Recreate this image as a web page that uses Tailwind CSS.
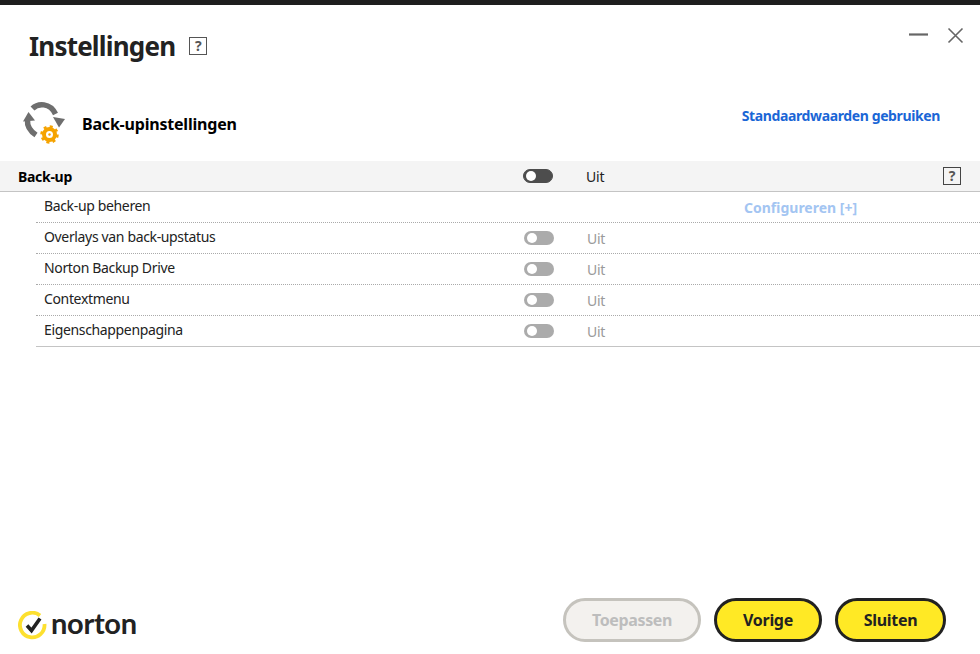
<!DOCTYPE html>
<html lang="nl">
<head>
<meta charset="utf-8">
<script src="https://cdn.jsdelivr.net/npm/@tailwindcss/browser@4"></script>
</head>
<body class="bg-white">
<div class="w-[980px] h-[654px] overflow-hidden flex flex-col bg-white text-[#222] font-['Noto_Sans','Open_Sans',sans-serif]">
  <div class="h-[5px] bg-[#1e1e1e] shrink-0"></div>

  <div class="h-[156px] shrink-0 flex flex-col">
    <div class="flex justify-between pl-[29px] pr-[16px] pt-[23px]">
      <div class="flex items-center gap-[14px] h-[36px]">
        <h1 class="text-[26px] leading-[36px] font-bold tracking-[-0.8px] text-[#222]">Instellingen</h1>
        <span class="w-[18px] h-[18px] -mt-[1px] border-[1.500px] border-[#555] flex items-center justify-center text-[14px] leading-none font-bold text-[#555]">?</span>
      </div>
      <div class="flex items-start gap-[19px] -mt-[2px]">
        <svg class="w-[19px] h-[20px]" viewBox="0 0 19 20"><path d="M0 8.500H19" stroke="#666" stroke-width="2.200"/></svg>
        <svg class="w-[17px] h-[17px] mt-[1px]" viewBox="0 0 17 17"><path d="M1.500 1.500L15.500 15.500M15.500 1.500L1.500 15.500" stroke="#666" stroke-width="1.600" fill="none"/></svg>
      </div>
    </div>
    <div class="flex items-start justify-between pl-[22px] pr-[40px] mt-[37px]">
      <div class="flex items-center gap-[15px]">
        <svg class="w-[45px] h-[46px]" viewBox="0 0 45 46">
          <path d="M10.500 7.500C16 2 28 1.500 33.500 13" stroke="#6e6e6e" stroke-width="5.500" fill="none"/>
          <path d="M31 16L43 18L37 26.500Z" fill="#6e6e6e"/>
          <path d="M5.500 19C5 25 8 30 14 34" stroke="#6e6e6e" stroke-width="5.500" fill="none"/>
          <path d="M1 20.500L6.500 11L13 19.500Z" fill="#6e6e6e"/>
          <circle cx="27.500" cy="33.500" r="5.500" fill="none" stroke="#f5a300" stroke-width="4"/>
          <circle cx="27.500" cy="33.500" r="8" fill="none" stroke="#f5a300" stroke-width="2.500" stroke-dasharray="3 3.280"/>
          <circle cx="27.500" cy="33.500" r="1.200" fill="#f5a300"/>
        </svg>
        <h2 class="text-[16px] leading-[22px] font-bold tracking-[-0.2px] text-black">Back-upinstellingen</h2>
      </div>
      <a class="text-[14px] leading-[20px] font-bold tracking-[-0.38px] text-[#1a66d6] mt-[5px]">Standaardwaarden gebruiken</a>
    </div>
  </div>

  <div class="h-[31px] shrink-0 bg-[#f4f4f4] border-b border-[#c4c4c4] flex items-center pl-[18px] pr-[19px]">
    <span class="w-[505px] mt-[1px] text-[14px] font-bold tracking-[-0.3px] text-black">Back-up</span>
    <span class="w-[30px] h-[14px] rounded-full bg-[#4d4d4d] flex items-center pl-[2px] border border-[#4d4d4d]"><span class="w-[10px] h-[10px] rounded-full bg-white"></span></span>
    <span class="ml-[33px] text-[14px] tracking-[-0.2px] text-[#222]">Uit</span>
    <span class="ml-auto w-[18px] h-[18px] border-[1.500px] border-[#444] flex items-center justify-center text-[14px] leading-none font-bold text-[#555]">?</span>
  </div>

  <div class="ml-[36px] flex flex-col text-[14px] tracking-[-0.35px] text-[#222]">
    <div class="h-[31px] border-b border-dotted border-[#aaa] flex items-center pl-[8px]">
      <span class="w-[700px] -mt-[3px]">Back-up beheren</span>
      <span class="mt-[1px] text-[14px] font-bold text-[#a3c5f2] tracking-[0px]">Configureren [+]</span>
    </div>
    <div class="h-[31px] border-b border-dotted border-[#aaa] flex items-center pl-[8px]">
      <span class="w-[480px] -mt-[3px]">Overlays van back-upstatus</span>
      <span class="w-[30px] h-[14px] rounded-full bg-[#ababab] flex items-center pl-[3px]"><span class="w-[10px] h-[10px] rounded-full bg-white"></span></span>
      <span class="ml-[33px] text-[#9a9a9a]">Uit</span>
    </div>
    <div class="h-[31px] border-b border-dotted border-[#aaa] flex items-center pl-[8px]">
      <span class="w-[480px] -mt-[3px]">Norton Backup Drive</span>
      <span class="w-[30px] h-[14px] rounded-full bg-[#ababab] flex items-center pl-[3px]"><span class="w-[10px] h-[10px] rounded-full bg-white"></span></span>
      <span class="ml-[33px] text-[#9a9a9a]">Uit</span>
    </div>
    <div class="h-[31px] border-b border-dotted border-[#aaa] flex items-center pl-[8px]">
      <span class="w-[480px] -mt-[3px]">Contextmenu</span>
      <span class="w-[30px] h-[14px] rounded-full bg-[#ababab] flex items-center pl-[3px]"><span class="w-[10px] h-[10px] rounded-full bg-white"></span></span>
      <span class="ml-[33px] text-[#9a9a9a]">Uit</span>
    </div>
    <div class="h-[31px] border-b border-[#c4c4c4] flex items-center pl-[8px]">
      <span class="w-[480px] -mt-[3px]">Eigenschappenpagina</span>
      <span class="w-[30px] h-[14px] rounded-full bg-[#ababab] flex items-center pl-[3px]"><span class="w-[10px] h-[10px] rounded-full bg-white"></span></span>
      <span class="ml-[33px] text-[#9a9a9a]">Uit</span>
    </div>
  </div>

  <div class="mt-auto h-[56px] mb-[6px] shrink-0 flex items-center pl-[18px] pr-[34px]">
    <div class="flex items-center gap-[4px] self-end mb-[8px]">
      <svg class="w-[29px] h-[29px]" viewBox="0 0 29 29">
        <path d="M22 4.500A12.300 12.300 0 1 0 26.500 13" stroke="#fde02f" stroke-width="3.800" fill="none"/>
        <path d="M9 14.500L13.500 19.500L22 7.500" stroke="#222" stroke-width="3.600" fill="none"/>
      </svg>
      <span class="text-[29px] leading-[30px] -mt-[5px] font-['Lato',sans-serif] font-bold tracking-[-0.3px] text-[#222]">norton</span>
    </div>
    <div class="ml-auto flex gap-[13px]">
      <button class="w-[138px] h-[44px] rounded-full border-[3px] border-[#c5c3bd] bg-[#f3f1ee] text-[16px] font-bold tracking-[-0.35px] text-[#bdbdbd]">Toepassen</button>
      <button class="w-[108px] h-[44px] rounded-full border-[3px] border-[#222] bg-[#ffe925] text-[16px] font-bold tracking-[-0.3px] text-[#222]">Vorige</button>
      <button class="w-[111px] h-[44px] rounded-full border-[3px] border-[#222] bg-[#ffe925] text-[16px] font-bold tracking-[-0.3px] text-[#222]">Sluiten</button>
    </div>
  </div>
</div>
</body>
</html>
